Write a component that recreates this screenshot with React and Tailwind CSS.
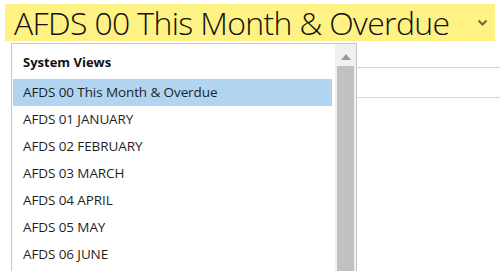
import React from 'react';

const views = [
  'AFDS 00 This Month & Overdue',
  'AFDS 01 JANUARY',
  'AFDS 02 FEBRUARY',
  'AFDS 03 MARCH',
  'AFDS 04 APRIL',
  'AFDS 05 MAY',
  'AFDS 06 JUNE',
];

export default function App() {
  return (
    <div className="w-[500px] h-[271px] overflow-hidden bg-white font-['Open_Sans',sans-serif] text-[#1f1f1f]">
      {/* view selector header */}
      <div className="pt-[4px] pl-[5px]">
        <div className="w-[490px] h-[37px] bg-[#fff284] flex items-center pl-[9px]">
          <span className="text-[32px] font-light leading-none tracking-[-0.65px] text-[#111] whitespace-nowrap">
            AFDS 00 This Month &amp; Overdue
          </span>
          <svg className="ml-auto mr-[7px]" width="11" height="7" viewBox="0 0 11 7">
            <path d="M1.5 1.5 L5.5 5.5 L9.5 1.5" fill="none" stroke="#6a6650" strokeWidth="2" />
          </svg>
        </div>
      </div>

      <div className="flex mt-[2px]">
        <div className="w-[11px]" />
        {/* dropdown */}
        <div className="w-[346px] h-[230px] border border-[#c8c8c8] border-b-0 flex bg-white">
          <div className="flex-1 pl-px pt-px">
            <div className="h-[34px] flex items-center pl-[10px] pt-[2px] text-[13px] font-bold text-[#111]">
              System Views
            </div>
            {views.map((v, i) => (
              <div
                key={v}
                className={`h-[27px] flex items-center pl-[10px] text-[13.5px] tracking-[-0.1px] whitespace-nowrap ${
                  i === 0 ? 'bg-[#b1d5f0]' : ''
                }`}
              >
                {v}
              </div>
            ))}
          </div>
          <div className="w-[21px] ml-[3px] bg-[#f0f0f0] flex flex-col items-center pt-[10px]">
            <svg width="10" height="6" viewBox="0 0 10 6">
              <path d="M0 6 L5 0 L10 6 Z" fill="#9a9a9a" />
            </svg>
            <div className="w-[17px] flex-1 mt-[6px] bg-[#c1c1c1]" />
          </div>
        </div>
        {/* underlying page content */}
        <div className="flex-1">
          <div className="h-[24px]" />
          <div className="h-[31px] border-t border-b border-[#d6d6d6]" />
        </div>
      </div>
    </div>
  );
}
